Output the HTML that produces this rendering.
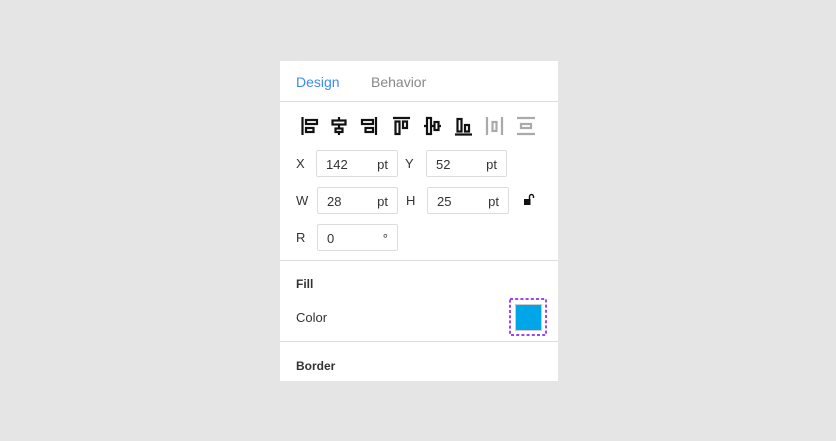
<!DOCTYPE html><html><head><style>
body{margin:0;width:836px;height:441px;background:#e5e5e5;font-family:"Liberation Sans",sans-serif;position:relative;overflow:hidden}
.p{position:absolute;left:280px;top:61px;width:278px;height:320px;background:#fff}
.t{position:absolute;font-size:13px;color:#333}
.in{position:absolute;border:1px solid #ddd;border-radius:2px;height:27px;box-sizing:border-box;font-size:13px;color:#333}
.in span{position:absolute;top:6px}
.hr{position:absolute;left:0;width:278px;height:1px;background:#ddd}
svg{position:absolute}
</style></head><body><div class="p">
<div class="t" style="left:16px;top:13px;color:#3c8cf0;font-size:14px">Design</div>
<div class="t" style="left:91px;top:13px;color:#888;font-size:14px">Behavior</div>
<div class="hr" style="top:40px"></div>
<svg style="left:18px;top:54px" width="250" height="22" fill="none" stroke="#111" stroke-width="2.2">
<g><line x1="4.5" y1="2" x2="4.5" y2="20"/><rect x="8" y="5" width="11" height="4"/><rect x="8" y="13" width="7.5" height="4"/></g>
<g transform="translate(31,0)"><line x1="10" y1="2" x2="10" y2="20"/><rect x="3.5" y="5.5" width="13" height="4" fill="#fff"/><rect x="6.5" y="13.5" width="7" height="3.5" fill="#fff"/></g>
<g transform="translate(62,0)"><line x1="16" y1="2" x2="16" y2="20"/><rect x="2" y="5" width="11" height="4"/><rect x="5.5" y="13" width="7.5" height="4"/></g>
<g transform="translate(93,0)"><line x1="2" y1="3" x2="19" y2="3"/><rect x="4.5" y="6.5" width="4" height="12.5"/><rect x="12" y="6.5" width="4" height="6.5"/></g>
<g transform="translate(124,0)"><line x1="2" y1="11" x2="19" y2="11"/><rect x="5" y="3" width="4" height="16" fill="#fff"/><rect x="12.5" y="7" width="4" height="8" fill="#fff"/></g>
<g transform="translate(155,0)"><line x1="2" y1="19.5" x2="19" y2="19.5"/><rect x="4.5" y="4" width="4" height="12.5"/><rect x="12" y="10" width="4" height="6.5"/></g>
<g transform="translate(186,0)" stroke="#aaa"><line x1="3" y1="2" x2="3" y2="20"/><line x1="18" y1="2" x2="18" y2="20"/><rect x="8.5" y="7" width="4" height="9"/></g>
<g transform="translate(217,0)" stroke="#aaa"><line x1="2" y1="3" x2="20" y2="3"/><line x1="2" y1="19" x2="20" y2="19"/><rect x="6" y="9" width="10" height="4"/></g>
</svg>
<div class="t" style="left:16px;top:95px">X</div>
<div class="in" style="left:36px;top:89px;width:82px"><span style="left:9px">142</span><span style="right:9px">pt</span></div>
<div class="t" style="left:125px;top:95px">Y</div>
<div class="in" style="left:146px;top:89px;width:81px"><span style="left:9px">52</span><span style="right:9px">pt</span></div>
<div class="t" style="left:16px;top:132px">W</div>
<div class="in" style="left:37px;top:126px;width:81px"><span style="left:9px">28</span><span style="right:9px">pt</span></div>
<div class="t" style="left:126px;top:132px">H</div>
<div class="in" style="left:147px;top:126px;width:82px"><span style="left:9px">25</span><span style="right:9px">pt</span></div>
<svg style="left:243px;top:132px" width="12" height="14"><path d="M6.5 6V3.5a2 2 0 0 1 4 0V5" stroke="#111" stroke-width="1.4" fill="none"/><rect x="1" y="6" width="6.5" height="6" fill="#111"/></svg>
<div class="t" style="left:16px;top:169px">R</div>
<div class="in" style="left:37px;top:163px;width:81px"><span style="left:9px">0</span><span style="right:9px">°</span></div>
<div class="hr" style="top:199px"></div>
<div class="t" style="left:16px;top:216px;font-weight:bold;font-size:12px">Fill</div>
<div class="t" style="left:16px;top:249px">Color</div>
<svg style="left:229px;top:237px" width="38" height="38"><rect x="1" y="1" width="36" height="36" fill="none" stroke="#9b45f5" stroke-width="2" stroke-dasharray="3 2.2"/></svg>
<div style="position:absolute;left:235px;top:243px;width:27px;height:27px;background:#00a6e8;border:1px solid #ccc;box-sizing:border-box"></div>
<div class="hr" style="top:280px"></div>
<div class="t" style="left:16px;top:298px;font-weight:bold;font-size:12px">Border</div>
</div></body></html>
